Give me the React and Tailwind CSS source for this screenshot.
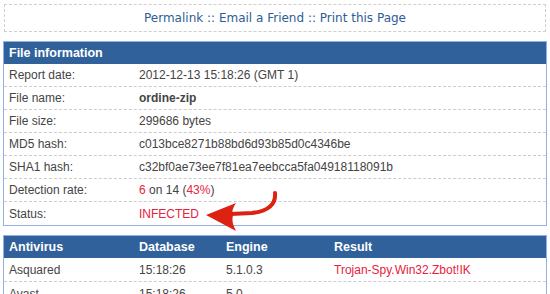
import React from 'react';

const fileInfo = [
  { label: 'Report date:', value: '2012-12-13 15:18:26 (GMT 1)' },
  { label: 'File name:', value: <b className="font-bold">ordine-zip</b> },
  { label: 'File size:', value: '299686 bytes' },
  { label: 'MD5 hash:', value: 'c013bce8271b88bd6d93b85d0c4346be' },
  { label: 'SHA1 hash:', value: 'c32bf0ae73ee7f81ea7eebcca5fa04918118091b' },
  {
    label: 'Detection rate:',
    value: (
      <>
        <span className="text-[#e8213c]">6</span> on 14 (<span className="text-[#e8213c]">43%</span>)
      </>
    ),
  },
  { label: 'Status:', value: <span className="text-[#e8213c]">INFECTED</span> },
];

const scans = [
  { av: 'Asquared', db: '15:18:26', engine: '5.1.0.3', result: 'Trojan-Spy.Win32.Zbot!IK' },
  { av: 'Avast', db: '15:18:26', engine: '5.0', result: '' },
];

const Arrow = () => (
  <svg className="absolute left-[192px] top-[147px]" width="82" height="48" viewBox="0 0 82 48">
    <path d="M79,4 C80,15 73,22 56,24 L34,25" fill="none" stroke="#dd2211" strokeWidth="4" strokeLinecap="round" />
    <path d="M10,26 L40,14 Q35,21 37,26 Q35,33 40,42 Z" fill="#dd2211" />
  </svg>
);

const App = () => {
  return (
    <div className="w-[550px] h-[294px] overflow-hidden bg-white text-[12px] text-[#444] font-['Liberation_Sans',Arial,sans-serif]">
      <div className="mx-[4px] mt-[4px] h-[28px] border border-dashed border-[#cfcfcf] flex items-center justify-center font-['DejaVu_Sans',Verdana,sans-serif] text-[12px] text-[#2c5d96]">
        Permalink :: Email a Friend :: Print this Page
      </div>

      <div className="relative mx-[3px] mt-[9px] border border-[#8fb1e3]">
        <div className="h-[22px] bg-[#30619a] text-white font-bold flex items-center px-[5px] text-[12.5px]">
          File information
        </div>
        {fileInfo.map((row, i) => (
          <div
            key={row.label}
            className={`grid grid-cols-[130px_1fr] items-center h-[23px] px-[5px] ${i < fileInfo.length - 1 ? 'border-b border-dashed border-[#cccccc]' : ''}`}
          >
            <span>{row.label}</span>
            <span>{row.value}</span>
          </div>
        ))}
        <Arrow />
      </div>

      <div className="mx-[3px] mt-[9px] border border-[#8fb1e3]">
        <div className="grid grid-cols-[130px_87px_108px_1fr] items-center h-[22px] bg-[#30619a] text-white font-bold px-[5px] text-[12.5px]">
          <span>Antivirus</span>
          <span>Database</span>
          <span>Engine</span>
          <span>Result</span>
        </div>
        {scans.map((s) => (
          <div
            key={s.av}
            className="grid grid-cols-[130px_87px_108px_1fr] items-center h-[24px] px-[5px] border-b border-dashed border-[#cccccc]"
          >
            <span>{s.av}</span>
            <span>{s.db}</span>
            <span>{s.engine}</span>
            <span className="text-[#e8213c]">{s.result}</span>
          </div>
        ))}
      </div>
    </div>
  );
};

export default App;
